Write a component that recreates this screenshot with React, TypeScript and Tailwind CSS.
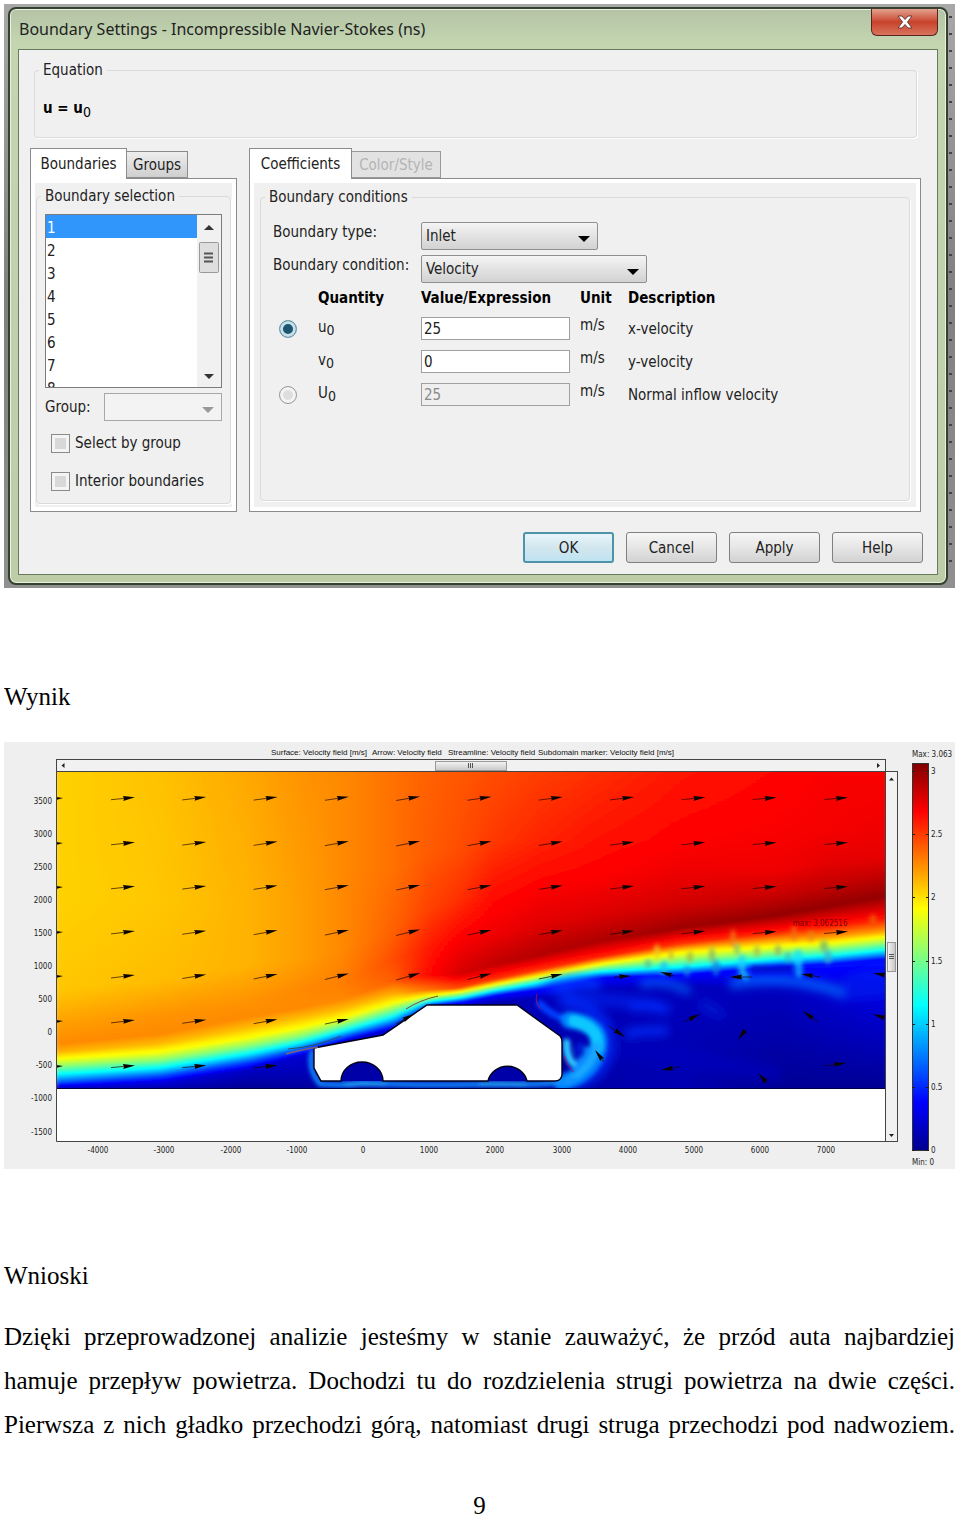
import { useState } from "react";
import type { ReactNode } from "react";

const BOUNDARIES = [1, 2, 3, 4, 5, 6, 7, 8];

const QUANTITIES = [
  { symbol: "u", value: "25", description: "x-velocity", mode: "components" },
  { symbol: "v", value: "0", description: "y-velocity", mode: null },
  { symbol: "U", value: "25", description: "Normal inflow velocity", mode: "normal", disabled: true },
];

// Levels of the velocity field, from the top of the domain to the ground.
// Every column is [x, [y, level] ...] with level 0..1 on the jet scale.
const FIELD: [number, [number, number][]][] = [
  [56, [[771, 0.67], [900, 0.67], [990, 0.68], [1025, 0.72], [1044, 0.74], [1052, 0.7], [1060, 0.61], [1067, 0.5], [1074, 0.38], [1082, 0.22], [1086, 0.12], [1089, 0.05]]],
  [160, [[771, 0.685], [900, 0.68], [980, 0.69], [1015, 0.73], [1034, 0.74], [1044, 0.69], [1053, 0.61], [1061, 0.5], [1068, 0.37], [1076, 0.2], [1082, 0.1], [1089, 0.04]]],
  [247, [[771, 0.71], [900, 0.7], [965, 0.7], [1000, 0.73], [1017, 0.74], [1028, 0.69], [1038, 0.62], [1047, 0.5], [1054, 0.37], [1062, 0.2], [1070, 0.07], [1089, 0.02]]],
  [300, [[771, 0.73], [900, 0.72], [960, 0.72], [990, 0.74], [1008, 0.74], [1018, 0.69], [1028, 0.62], [1037, 0.5], [1043, 0.37], [1050, 0.2], [1056, 0.08], [1089, 0.03]]],
  [340, [[771, 0.74], [870, 0.74], [950, 0.74], [985, 0.75], [1000, 0.74], [1010, 0.69], [1019, 0.62], [1026, 0.5], [1032, 0.37], [1038, 0.2], [1042, 0.08], [1089, 0.03]]],
  [393, [[771, 0.765], [870, 0.765], [930, 0.78], [960, 0.8], [982, 0.78], [994, 0.7], [1003, 0.62], [1010, 0.5], [1017, 0.37], [1024, 0.2], [1029, 0.08], [1089, 0.03]]],
  [427, [[771, 0.78], [850, 0.785], [910, 0.81], [950, 0.85], [975, 0.865], [990, 0.76], [996, 0.62], [999, 0.5], [1002, 0.37], [1006, 0.15], [1010, 0.08], [1089, 0.03]]],
  [460, [[771, 0.79], [850, 0.8], [900, 0.83], [940, 0.88], [974, 0.915], [988, 0.8], [992, 0.62], [995, 0.5], [998, 0.37], [1002, 0.15], [1008, 0.05], [1089, 0.03]]],
  [493, [[771, 0.8], [840, 0.82], [890, 0.86], [935, 0.89], [965, 0.935], [980, 0.82], [985, 0.62], [988, 0.5], [991, 0.36], [996, 0.12], [1004, 0.04], [1089, 0.02]]],
  [540, [[771, 0.815], [840, 0.84], [880, 0.87], [925, 0.905], [955, 0.95], [970, 0.82], [976, 0.62], [979, 0.5], [983, 0.36], [989, 0.14], [998, 0.06], [1089, 0.03]]],
  [600, [[771, 0.83], [840, 0.86], [880, 0.88], [915, 0.91], [941, 0.955], [957, 0.84], [964, 0.63], [968, 0.5], [972, 0.36], [978, 0.12], [990, 0.06], [1089, 0.04]]],
  [680, [[771, 0.855], [840, 0.875], [870, 0.89], [905, 0.92], [928, 0.97], [944, 0.82], [951, 0.66], [959, 0.53], [967, 0.38], [975, 0.13], [986, 0.06], [1089, 0.05]]],
  [780, [[771, 0.87], [830, 0.88], [870, 0.89], [895, 0.93], [915, 0.98], [932, 0.84], [941, 0.7], [950, 0.56], [958, 0.4], [967, 0.13], [990, 0.06], [1089, 0.02]]],
  [830, [[771, 0.88], [830, 0.885], [862, 0.9], [886, 0.935], [906, 0.98], [927, 0.84], [937, 0.72], [946, 0.57], [955, 0.4], [964, 0.14], [990, 0.08], [1089, 0.02]]],
  [886, [[771, 0.88], [830, 0.89], [858, 0.9], [878, 0.94], [896, 0.98], [918, 0.86], [931, 0.72], [942, 0.54], [950, 0.38], [959, 0.14], [990, 0.1], [1089, 0.02]]],
];

const COLUMN = 4;

function jet(level: number) {
  const channel = (centre: number) =>
    Math.round(255 * Math.max(0, Math.min(1, 1.5 - Math.abs(4 * level - centre))));
  return `rgb(${channel(3)},${channel(2)},${channel(1)})`;
}

function columnAt(x: number) {
  let i = 0;
  while (i < FIELD.length - 2 && FIELD[i + 1][0] < x) i++;
  const [x0, a] = FIELD[i];
  const [x1, b] = FIELD[i + 1];
  const t = Math.max(0, Math.min(1, (x - x0) / (x1 - x0)));
  return a.map(([y, v], k) => [y + (b[k][0] - y) * t, v + (b[k][1] - v) * t]);
}

const COLUMNS = Array.from({ length: 210 }, (_, i) => {
  const x = 52 + i * COLUMN;
  const points = columnAt(x + COLUMN / 2);
  const stops: { offset: number; color: string }[] = [];
  points.forEach(([y, v], k) => {
    const next = points[k + 1];
    const parts = next ? 4 : 1;
    for (let s = 0; s < parts; s++) {
      const yy = next ? y + ((next[0] - y) * s) / parts : y;
      const vv = next ? v + ((next[1] - v) * s) / parts : v;
      stops.push({ offset: (yy - 771) / 318, color: jet(vv) });
    }
  });
  return { x, stops };
});

// Regular arrow grid: row y, how many columns it has, tilt at the peak
const ARROW_ROWS = [
  { y: 798, count: 11, lift: 2 },
  { y: 843, count: 11, lift: 3 },
  { y: 887, count: 11, lift: 3 },
  { y: 932, count: 11, lift: 4 },
  { y: 976, count: 7, lift: 5 },
  { y: 1021, count: 4, lift: 4 },
  { y: 1066, count: 3, lift: 1 },
];

const GRID_ARROWS = ARROW_ROWS.flatMap(({ y, count, lift }) =>
  Array.from({ length: count }, (_, i) => {
    const x = 111 + i * 71.3;
    const rise = 1 + lift * Math.max(0, 1 - Math.abs(i - 4) / 5);
    return [x, y + rise / 2 + 1, x + 24, y - rise / 2];
  })
);

const WAKE_ARROWS = [
  [396, 1024, 414, 1014],
  [614, 977, 631, 976],
  [674, 976, 660, 972],
  [752, 977, 730, 977],
  [820, 977, 801, 974],
  [890, 976, 873, 973],
  [684, 1022, 700, 1014],
  [818, 1022, 803, 1011],
  [890, 1020, 873, 1014],
  [609, 1026, 625, 1037],
  [746, 1029, 738, 1040],
  [604, 1062, 595, 1050],
  [680, 1067, 661, 1070],
  [767, 1083, 758, 1073],
  [824, 1066, 846, 1063],
];

function Arrow({ points }: { points: number[] }) {
  const [x1, y1, x2, y2] = points;
  const angle = (Math.atan2(y2 - y1, x2 - x1) * 180) / Math.PI;
  const length = Math.hypot(x2 - x1, y2 - y1);
  return (
    <g transform={`translate(${x2} ${y2}) rotate(${angle})`}>
      <path d={`M${-length} 0H-8`} stroke="#1a0500" strokeWidth="0.8" opacity="0.8" />
      <path d="M0 0L-12 -2.400L-11 0L-12 2.400Z" fill="#0c0400" />
    </g>
  );
}

// Eddies in the mixing layer: x, y, rx, ry, colour
const EDDIES: [number, number, number, number, string][] = [
  [657, 952, 3, 8, "#e8d020"],
  [648, 964, 3, 5, "#50b8a0"],
  [664, 968, 4, 7, "#18c0f0"],
  [671, 955, 2, 5, "#c0a040"],
  [690, 957, 3, 6, "#a0b040"],
  [687, 971, 3, 6, "#1890e0"],
  [712, 955, 3, 8, "#80b070"],
  [716, 968, 4, 8, "#1080d8"],
  [733, 938, 3, 9, "#f08010"],
  [742, 966, 4, 12, "#18d0f8"],
  [737, 949, 3, 6, "#70c080"],
  [746, 976, 3, 5, "#18b0f8"],
  [757, 951, 3, 6, "#a0b850"],
  [778, 950, 3, 6, "#90a860"],
  [788, 957, 3, 5, "#40b8b0"],
  [798, 958, 5, 9, "#18e0f8"],
  [799, 970, 4, 8, "#10b8ff"],
  [794, 933, 3, 8, "#f07010"],
  [811, 936, 3, 6, "#e88818"],
  [824, 946, 4, 6, "#70b070"],
  [828, 957, 4, 7, "#38b0c8"],
  [873, 920, 4, 6, "#f06000"],
];

const TITLES = [
  { x: 271, text: "Surface: Velocity field [m/s]" },
  { x: 372, text: "Arrow: Velocity field" },
  { x: 448, text: "Streamline: Velocity field" },
  { x: 538, text: "Subdomain marker: Velocity field [m/s]" },
];

const Y_TICKS = [3500, 3000, 2500, 2000, 1500, 1000, 500, 0, -500, -1000, -1500];
const X_TICKS = [-4000, -3000, -2000, -1000, 0, 1000, 2000, 3000, 4000, 5000, 6000, 7000];
const SCALE_TICKS = [3, 2.5, 2, 1.5, 1, 0.5, 0];

const CAR =
  "M314 1048L383 1035L427 1005H517L560 1036Q562 1038 562 1042V1075Q561 1081 555 1081H527A20 19 0 0 0 488 1081H383A21 19 0 0 0 341 1081H321L314 1068Z";

function VelocityPlot() {
  return (
    <svg
      viewBox="4 742 951 427"
      className="block w-full font-['DejaVu_Sans_Condensed','DejaVu_Sans',sans-serif] text-[8px]"
      role="img"
      aria-label="Velocity field"
    >
      <defs>
        {COLUMNS.map(({ x, stops }) => (
          <linearGradient key={x} id={`col${x}`} x1="0" y1="0" x2="0" y2="1">
            {stops.map((stop, i) => (
              <stop key={i} offset={stop.offset} stopColor={stop.color} />
            ))}
          </linearGradient>
        ))}
        <linearGradient id="scale" x1="0" y1="1" x2="0" y2="0">
          <stop offset="0" stopColor="#00008f" />
          <stop offset="0.125" stopColor="#0000ff" />
          <stop offset="0.375" stopColor="#00ffff" />
          <stop offset="0.625" stopColor="#ffff00" />
          <stop offset="0.875" stopColor="#ff0000" />
          <stop offset="1" stopColor="#800000" />
        </linearGradient>
        <linearGradient id="thumbH" x1="0" y1="0" x2="0" y2="1">
          <stop offset="0" stopColor="#f4f4f4" />
          <stop offset="1" stopColor="#c8c8c8" />
        </linearGradient>
        <linearGradient id="thumbV">
          <stop offset="0" stopColor="#f4f4f4" />
          <stop offset="1" stopColor="#c4c4c4" />
        </linearGradient>
        <filter id="smooth" x="-5%" y="0" width="110%" height="100%">
          <feGaussianBlur stdDeviation="4 0" />
        </filter>
        <filter id="blur2" x="-50%" y="-50%" width="200%" height="200%">
          <feGaussianBlur stdDeviation="2" />
        </filter>
        <filter id="blur5" x="-50%" y="-100%" width="200%" height="300%">
          <feGaussianBlur stdDeviation="5" />
        </filter>
        <clipPath id="domain">
          <path d="M57 772H885V1088H57Z" />
        </clipPath>
      </defs>

      <rect x="4" y="742" width="951" height="427" fill="#efefef" />

      {/* Titles */}
      {TITLES.map(({ x, text }) => (
        <text key={x} x={x} y="755" fill="#111" className="font-['Liberation_Sans',sans-serif]">
          {text}
        </text>
      ))}

      {/* Field */}
      <rect x="56" y="771" width="829" height="370" fill="#fff" />
      <g clipPath="url(#domain)">
        <g filter="url(#smooth)">
          {COLUMNS.map(({ x }) => (
            <rect key={x} x={x} y="771" width={COLUMN + 1} height="318" fill={`url(#col${x})`} />
          ))}
        </g>

        {/* Wake */}
        <g fill="none" filter="url(#blur5)">
          <path d="M545 985Q580 1000 610 1000Q650 1004 670 1010" stroke="#0a30ff" strokeWidth="12" opacity="0.5" />
          <path d="M555 985Q575 978 600 985" stroke="#0848ff" strokeWidth="10" opacity="0.7" />
          <path d="M640 984Q665 978 690 992" stroke="#0070ff" strokeWidth="7" opacity="0.8" />
          <path d="M730 984Q790 972 845 994" stroke="#0070ff" strokeWidth="10" opacity="0.8" />
          <path d="M630 1008Q650 1002 665 1010" stroke="#0030ff" strokeWidth="8" opacity="0.8" />
          <path d="M625 1034Q645 1030 668 1031" stroke="#0030ff" strokeWidth="9" opacity="0.8" />
          <path d="M845 975Q870 966 890 966L890 995Q870 1000 840 1000Z" fill="#0020f0" opacity="0.7" />
          <path d="M700 1003Q720 1012 720 1018" stroke="#0018d8" strokeWidth="12" opacity="0.7" />
          <path d="M620 1050Q700 1060 780 1074" stroke="#0000c0" strokeWidth="16" opacity="0.6" />
          <path d="M560 1000Q612 1010 608 1050Q602 1075 575 1084" stroke="#0030ff" strokeWidth="14" opacity="0.7" />
        </g>
        <g filter="url(#blur2)">
          {EDDIES.map(([x, y, rx, ry, fill]) => (
            <ellipse key={`${x}-${y}`} cx={x} cy={y} rx={rx} ry={ry} fill={fill} opacity="0.75" />
          ))}
          <path d="M752 966Q775 968 793 966V971Q775 972 752 972Z" fill="#0018c8" />
        </g>
        <g fill="none" filter="url(#blur2)" strokeLinecap="round">
          <path d="M540 1004Q552 1016 568 1020" stroke="#0040ff" strokeWidth="7" />
          <path d="M569 1020Q604 1024 598 1050Q591 1074 562 1083" stroke="#0080ff" strokeWidth="17" />
          <path d="M574 1021Q600 1028 597 1048" stroke="#08c8ff" strokeWidth="12" />
          <path d="M597 1046Q592 1068 568 1081" stroke="#18a8ff" strokeWidth="8" />
          <path d="M566 1042Q565 1058 575 1065Q584 1062 587 1050" stroke="#1088ff" strokeWidth="7" />
          <path d="M567 1042Q567 1056 573 1064" stroke="#30d0ff" strokeWidth="6" />
          <ellipse cx="580" cy="1050" rx="5" ry="8" fill="#0018d0" />
          <path d="M312 1052Q308 1070 320 1084Q345 1086 362 1083Q420 1086 500 1084Q540 1086 575 1080" stroke="#1090ff" strokeWidth="5" />
          <path d="M346 1084H385M480 1084H525" stroke="#20b0ff" strokeWidth="4" />
        </g>
        <path d="M341 1081A21 19 0 0 1 383 1081ZM488 1081A20 19 0 0 1 527 1081Z" fill="#0000a8" />
      </g>
      <path d={CAR} fill="#fff" stroke="#000018" strokeWidth="1.400" />
      <path d="M56 1088.500H885" stroke="#000040" />

      {/* Streamline traces */}
      <g fill="none" strokeWidth="0.800">
        <path d="M288 1049Q315 1047 341 1036" stroke="#404040" />
        <path d="M286 1054Q300 1050 318 1047" stroke="#806080" strokeWidth="1.400" />
        <path d="M406 1009Q420 1000 438 996" stroke="#802010" />
        <path d="M537 994Q534 1003 541 1009M564 1056Q568 1068 574 1072" stroke="#b01060" />
      </g>

      {/* Arrows */}
      {ARROW_ROWS.map(({ y }) => (
        <path key={y} d={`M56 ${y - 1}L63 ${y}L56 ${y + 2}Z`} fill="#0c0400" />
      ))}
      <g clipPath="url(#domain)">
        {[...GRID_ARROWS, ...WAKE_ARROWS].map((points) => (
          <Arrow key={points.join()} points={points} />
        ))}
      </g>
      <text x="793" y="926" fill="#4a0000" opacity="0.8">max: 3.062516</text>

      <path d="M56.500 771V1141.500H897.500V771.500M885.500 759.500V1141" fill="none" stroke="#444" />

      {/* Scroll bars */}
      <rect x="56.500" y="759.500" width="829" height="12" fill="#f1f1f1" stroke="#444" />
      <rect x="435.500" y="761.500" width="71" height="9" fill="url(#thumbH)" stroke="#999" />
      <path d="M468.500 763V768M470.500 763V768M472.500 763V768" stroke="#555" />
      <path d="M64.500 763V768L61.500 765.500ZM877 763V768L880 765.500Z" fill="#222" />
      <rect x="885.500" y="771.500" width="12" height="370" fill="#f1f1f1" stroke="#444" />
      <rect x="887.500" y="942.500" width="8" height="29" fill="url(#thumbV)" stroke="#999" />
      <path d="M889 954.500H894M889 956.500H894M889 958.500H894" stroke="#555" />
      <path d="M889 780.500H894L891.500 777.500ZM889 1134H894L891.500 1137Z" fill="#222" />

      {/* Axis labels */}
      <g fill="#222" textAnchor="end">
        {Y_TICKS.map((tick, i) => (
          <text key={tick} x="52" y={804 + Math.round(i * 33.05)}>{tick}</text>
        ))}
      </g>
      <g fill="#222" textAnchor="middle">
        {X_TICKS.map((tick) => (
          <text key={tick} x={363 + Math.round(tick * 0.0662)} y="1153">{tick}</text>
        ))}
      </g>

      {/* Colour scale */}
      <rect x="912.500" y="763.500" width="16" height="387" fill="url(#scale)" stroke="#333" />
      <g fill="#222">
        {SCALE_TICKS.map((tick) => {
          const y = 1150 - Math.round(tick * 126.3);
          return (
            <g key={tick}>
              <path d={`M912 ${y}.500h3M926 ${y}.500h3`} stroke="#222" />
              <text x="931" y={y + 3}>{tick}</text>
            </g>
          );
        })}
        <text x="912" y="757">Max: 3.063</text>
        <text x="912" y="1165">Min: 0</text>
      </g>
    </svg>
  );
}

function Group({ title, className, children }: { title: string; className: string; children: ReactNode }) {
  return (
    <fieldset className={`min-w-0 rounded-sm border border-[#dadada] shadow-[1px_1px_0_#fff] ${className}`}>
      <legend className="-ml-1 px-1 leading-5">{title}</legend>
      {children}
    </fieldset>
  );
}

function Caret({ className }: { className: string }) {
  return (
    <svg viewBox="0 0 12 6" className={`pointer-events-none absolute h-[6px] w-3 ${className}`} aria-hidden="true">
      <path d="M0 0H12L6 6Z" fill="currentColor" />
    </svg>
  );
}

function Symbol({ name }: { name: string }) {
  return (
    <>
      {name}
      <sub className="text-[14px]">0</sub>
    </>
  );
}

function BoundariesPane() {
  const [selected, setSelected] = useState(1);

  return (
    <section className="w-[207px] shrink-0">
      <div role="tablist" className="flex h-[30px] items-end">
        <button role="tab" aria-selected="true" className="relative z-10 -mb-px h-[31px] w-[97px] border border-b-0 border-[#8c8c8c] bg-white">
          Boundaries
        </button>
        <button role="tab" aria-selected="false" className="h-[27px] w-[61px] border border-l-0 border-[#8c8c8c] bg-linear-to-b from-[#eee] to-[#cfcfcf]">
          Groups
        </button>
      </div>
      <div className="h-[334px] border border-[#8c8c8c] bg-white p-1">
        <div className="h-full bg-[#f0f0f0] px-px pt-[3px]">
          <Group title="Boundary selection" className="h-[318px] px-2">
            <div className="mt-2 flex h-[174px] border border-[#7c7c7c] bg-white">
              <ul role="listbox" aria-label="Boundary selection" className="flex-1 overflow-hidden">
                {BOUNDARIES.map((n) => (
                  <li
                    key={n}
                    role="option"
                    aria-selected={n === selected}
                    onClick={() => setSelected(n)}
                    className={`h-[23px] pl-px leading-[26px] ${n === selected ? "bg-[#3096fc] text-white" : ""}`}
                  >
                    {n}
                  </li>
                ))}
              </ul>
              <div className="flex w-6 flex-col items-center justify-between bg-[#f1f1f1] pb-2" aria-hidden="true">
                <svg viewBox="0 0 24 64" className="h-16 w-6">
                  <path d="M7 15H17L12 10Z" fill="#333" />
                  <rect x="2.500" y="27.500" width="19" height="30" rx="1" fill="#dedede" stroke="#999" />
                  <path d="M7 38.500H16M7 42.500H16M7 46.500H16" stroke="#555" strokeWidth="2" />
                </svg>
                <svg viewBox="0 0 10 5" className="h-[5px] w-[10px]">
                  <path d="M0 0H10L5 5Z" fill="#333" />
                </svg>
              </div>
            </div>
            <div className="mt-[5px] flex items-center justify-between">
              <label htmlFor="group">Group:</label>
              <div className="relative">
                <select id="group" disabled className="block h-7 w-[118px] appearance-none border border-[#a8a8a8] bg-[#f3f3f3]" />
                <Caret className="right-2 top-[14px] text-[#999]" />
              </div>
            </div>
            {["Select by group", "Interior boundaries"].map((label) => (
              <label key={label} className="ml-[6px] mt-3 mb-[18px] flex h-5 items-center gap-[5px] whitespace-nowrap">
                <input
                  type="checkbox"
                  className="size-[19px] shrink-0 appearance-none border border-[#8a8a8a] bg-[#d8d8d8] shadow-[inset_0_0_0_3px_#f4f4f4] checked:bg-[#345]"
                />
                {label}
              </label>
            ))}
          </Group>
        </div>
      </div>
    </section>
  );
}

function CoefficientsPane() {
  const [mode, setMode] = useState("components");

  return (
    <section className="min-w-0 flex-1">
      <div role="tablist" className="flex h-[30px] items-end">
        <button role="tab" aria-selected="true" className="relative z-10 -mb-px h-[31px] w-[103px] border border-b-0 border-[#8c8c8c] bg-white">
          Coefficients
        </button>
        <button role="tab" aria-selected="false" disabled className="h-[27px] w-[89px] border border-l-0 border-[#999] bg-[#e2e2e2] text-[#b4b4b4]">
          Color/Style
        </button>
      </div>
      <div className="h-[334px] border border-[#8c8c8c] bg-white p-1">
        <div className="h-full bg-[#f0f0f0] px-[6px] pt-1">
          <Group title="Boundary conditions" className="h-[314px] px-2">
            <div className="px-1">
              <div className="mt-[15px] flex h-7">
                <label htmlFor="type" className="w-[148px]">Boundary type:</label>
                <div className="relative">
                  <select id="type" className="block h-7 w-[177px] appearance-none rounded-xs border border-[#8f8f8f] bg-linear-to-b from-[#f4f4f4] to-[#d2d2d2] pl-1">
                    <option>Inlet</option>
                  </select>
                  <Caret className="right-2 top-[14px] text-black" />
                </div>
              </div>
              <div className="mt-[5px] flex h-7">
                <label htmlFor="condition" className="w-[148px] whitespace-nowrap">Boundary condition:</label>
                <div className="relative">
                  <select id="condition" className="block h-7 w-[226px] appearance-none rounded-xs border border-[#8f8f8f] bg-linear-to-b from-[#f4f4f4] to-[#d2d2d2] pl-1">
                    <option>Velocity</option>
                  </select>
                  <Caret className="right-2 top-[14px] text-black" />
                </div>
              </div>
              <table className="w-full table-fixed text-left">
                <thead>
                  <tr className="h-[29px] text-black">
                    <th className="w-[45px]" aria-label="Active" />
                    <th className="w-[103px]">Quantity</th>
                    <th className="w-[159px]">Value/Expression</th>
                    <th className="w-12">Unit</th>
                    <th>Description</th>
                  </tr>
                </thead>
                <tbody>
                  {QUANTITIES.map((q) => (
                    <tr key={q.symbol} className="h-[33px]">
                      <td>
                        {q.mode && (
                          <input
                            type="radio"
                            name="mode"
                            aria-label={q.description}
                            checked={mode === q.mode}
                            onChange={() => setMode(q.mode)}
                            className="ml-[6px] block size-[18px] appearance-none rounded-full border border-[#999] bg-[#ddd] shadow-[inset_0_0_0_3px_#f4f4f4] checked:border-[#7aa0b0] checked:bg-[#1d5470] checked:shadow-[inset_0_0_0_3px_#c4e0ea]"
                          />
                        )}
                      </td>
                      <td className="pb-1"><Symbol name={q.symbol} /></td>
                      <td>
                        <input
                          type="text"
                          aria-label={q.description}
                          defaultValue={q.value}
                          disabled={q.disabled}
                          className="block h-[23px] w-[149px] border border-[#a0a0a0] bg-white pl-[2px] disabled:bg-[#efefef] disabled:text-[#8a8a8a]"
                        />
                      </td>
                      <td className="pb-2">m/s</td>
                      <td>{q.description}</td>
                    </tr>
                  ))}
                </tbody>
              </table>
            </div>
          </Group>
        </div>
      </div>
    </section>
  );
}

function BoundaryDialog() {
  return (
    <div className="relative bg-linear-to-b from-[#a8a8a8] via-[#808080] to-[#909090] py-[3px] pl-1 pr-[7px]">
      {/* Ruler of the window behind */}
      <div className="absolute inset-y-3 right-[3px] w-[3px] bg-[repeating-linear-gradient(to_bottom,#444_0,#444_2px,transparent_2px,transparent_17px)]" />
      <div className="rounded-lg border-2 border-[#35402f] bg-linear-to-b from-[#b4c3a6] via-[#c3d6b0] via-[6%] to-[#bccda8] px-2 pb-2 font-['DejaVu_Sans_Condensed','DejaVu_Sans',sans-serif] text-[15px] leading-5 text-[#222] shadow-[inset_0_0_0_1px_#e8f2de]">
        <header className="flex h-[40px] justify-between">
          <h1 className="whitespace-nowrap pl-px pt-2 font-['Noto_Sans',sans-serif] text-[16px] leading-6">
            Boundary Settings - Incompressible Navier-Stokes (ns)
          </h1>
          <button
            aria-label="Close"
            className="flex h-[27px] w-[67px] items-center justify-center rounded-b-md border border-t-0 border-[#5c2420] bg-linear-to-b from-[#e0a08e] via-[#c8412a] to-[#d8745c]"
          >
            <svg viewBox="0 0 16 14" className="h-[14px] w-4" aria-hidden="true">
              <path d="M1 1H5L8 4.500L11 1H15L10.500 7L15 13H11L8 9.500L5 13H1L5.500 7Z" fill="#fff" stroke="#6b3a36" />
            </svg>
          </button>
        </header>

        <div className="border border-[#6a7a5e] bg-[#f0f0f0] px-3 pb-[11px] pt-[10px]">
          <Group title="Equation" className="mr-2 ml-[3px] h-[78px] px-2">
            <p className="pt-[18px] font-bold text-black">
              u = u<sub className="text-[14px] font-normal">0</sub>
            </p>
          </Group>
          <div className="mr-1 mt-[10px] flex gap-3 -ml-px">
            <BoundariesPane />
            <CoefficientsPane />
          </div>
          <footer className="mr-[2px] mt-5 flex justify-end gap-3">
            <button className="h-[31px] w-[91px] rounded-[3px] border-2 border-[#4f93ab] bg-linear-to-b from-[#e8f6fb] via-[#d3e6ee] to-[#bfe4f2]">OK</button>
            {["Cancel", "Apply", "Help"].map((label) => (
              <button key={label} className="h-[31px] w-[91px] rounded-[3px] border border-[#808080] bg-linear-to-b from-[#f6f6f6] via-[#e6e6e6] to-[#d2d2d2]">
                {label}
              </button>
            ))}
          </footer>
        </div>
      </div>
    </div>
  );
}

export default function App() {
  return (
    <main className="bg-white pl-1 pr-[5px] pt-1 font-['Liberation_Serif',serif] text-[25px] leading-[44px] text-black">
      <BoundaryDialog />
      <h2 className="mt-[87px]">Wynik</h2>
      <div className="mt-[23px]">
        <VelocityPlot />
      </div>
      <h2 className="mt-[85px]">Wnioski</h2>
      <p className="mt-[17px] text-justify [text-align-last:justify]">
        Dzięki przeprowadzonej analizie jesteśmy w stanie zauważyć, że przód auta najbardziej hamuje
        przepływ powietrza. Dochodzi tu do rozdzielenia strugi powietrza na dwie części. Pierwsza z
        nich gładko przechodzi górą, natomiast drugi struga przechodzi pod nadwoziem.
      </p>
      <footer className="mt-[37px] text-center">9</footer>
    </main>
  );
}
